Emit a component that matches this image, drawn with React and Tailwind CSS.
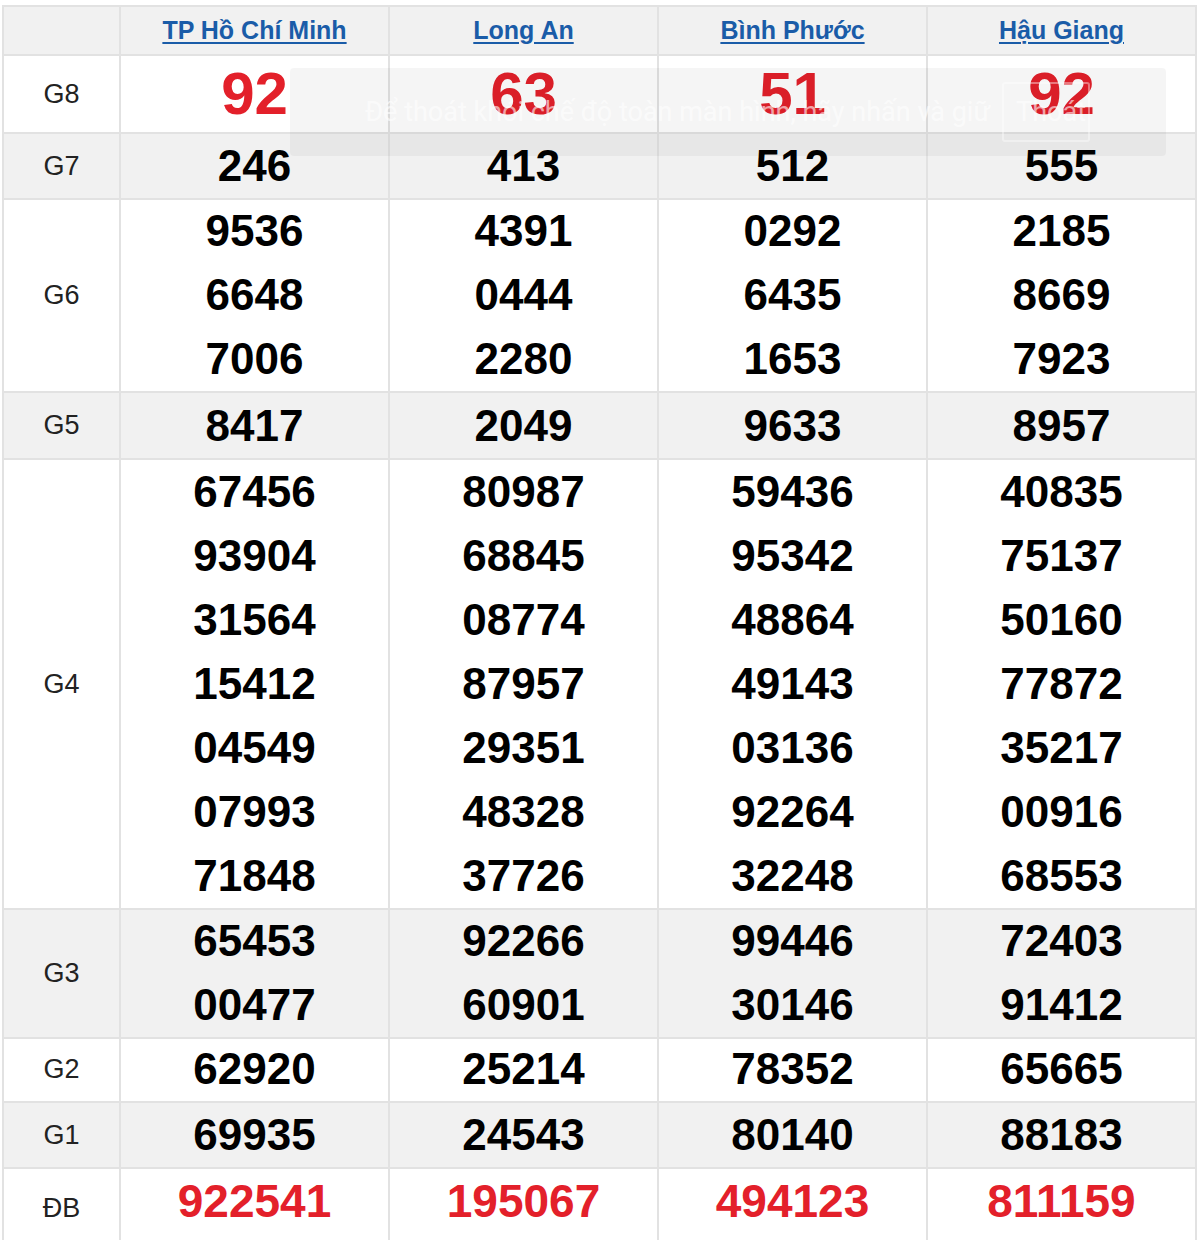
import React from "react";

const cols = [
  { name: "TP Hồ Chí Minh", g8: "92", g7: "246", g6: ["9536", "6648", "7006"], g5: "8417", g4: ["67456", "93904", "31564", "15412", "04549", "07993", "71848"], g3: ["65453", "00477"], g2: "62920", g1: "69935", db: "922541" },
  { name: "Long An", g8: "63", g7: "413", g6: ["4391", "0444", "2280"], g5: "2049", g4: ["80987", "68845", "08774", "87957", "29351", "48328", "37726"], g3: ["92266", "60901"], g2: "25214", g1: "24543", db: "195067" },
  { name: "Bình Phước", g8: "51", g7: "512", g6: ["0292", "6435", "1653"], g5: "9633", g4: ["59436", "95342", "48864", "49143", "03136", "92264", "32248"], g3: ["99446", "30146"], g2: "78352", g1: "80140", db: "494123" },
  { name: "Hậu Giang", g8: "92", g7: "555", g6: ["2185", "8669", "7923"], g5: "8957", g4: ["40835", "75137", "50160", "77872", "35217", "00916", "68553"], g3: ["72403", "91412"], g2: "65665", g1: "88183", db: "811159" },
];

const rows = [
  { key: "g8", label: "G8", h: "h-[78px]", bg: "bg-white", kind: "g8" },
  { key: "g7", label: "G7", h: "h-[65px]", bg: "bg-[#f1f1f1]" },
  { key: "g6", label: "G6", h: "h-[194px]", bg: "bg-white" },
  { key: "g5", label: "G5", h: "h-[67px]", bg: "bg-[#f1f1f1]" },
  { key: "g4", label: "G4", h: "h-[449px]", bg: "bg-white" },
  { key: "g3", label: "G3", h: "h-[128px]", bg: "bg-[#f1f1f1]" },
  { key: "g2", label: "G2", h: "h-[66px]", bg: "bg-white" },
  { key: "g1", label: "G1", h: "h-[65px]", bg: "bg-[#f1f1f1]" },
  { key: "db", label: "ĐB", h: "h-[90px]", bg: "bg-white", kind: "db" },
];

const gridCls = "grid grid-cols-[117px_269px_269px_269px_269px]";
const cellBorder = "border-r-2 border-b-2 border-[#e2e2e2]";

function NumberCell({ value, kind }) {
  const vals = Array.isArray(value) ? value : [value];
  if (kind === "g8") {
    return (
      <div className="flex flex-col items-center justify-center h-full">
        <span className="text-[60px] leading-[64px] font-bold text-[#e3202a]">{vals[0]}</span>
      </div>
    );
  }
  if (kind === "db") {
    return (
      <div className="flex flex-col items-center justify-start h-full">
        <span className="text-[46px] leading-[66px] font-bold text-[#e3202a]">{vals[0]}</span>
      </div>
    );
  }
  return (
    <div className="flex flex-col items-center justify-center h-full">
      {vals.map((v, i) => (
        <span key={i} className="text-[44px] leading-[64px] font-bold text-black">{v}</span>
      ))}
    </div>
  );
}

export default function App() {
  return (
    <div className="relative w-[1200px] h-[1240px] overflow-hidden bg-white font-['Liberation_Sans',Arial,sans-serif]">
      <div className="pl-[2px] pt-[5px]">
        <div className="w-[1195px] border-l-2 border-t-2 border-[#e2e2e2]">
          {/* header */}
          <div className={`${gridCls} h-[49px] bg-[#f1f1f1]`}>
            <div className={cellBorder}></div>
            {cols.map((c) => (
              <div key={c.name} className={`${cellBorder} flex items-center justify-center`}>
                <a className="text-[25px] font-bold text-[#1a5ca8] underline decoration-2 underline-offset-[3px] cursor-pointer">{c.name}</a>
              </div>
            ))}
          </div>
          {rows.map((r) => (
            <div key={r.key} className={`${gridCls} ${r.h} ${r.bg}`}>
              <div className={`${cellBorder} flex ${r.kind === "db" ? "items-start pt-[20px]" : "items-center"} justify-center`}>
                <span className="text-[27px] text-[#222]">{r.label}</span>
              </div>
              {cols.map((c) => (
                <div key={c.name} className={cellBorder}>
                  <NumberCell value={c[r.key]} kind={r.kind} />
                </div>
              ))}
            </div>
          ))}
        </div>
      </div>

      {/* fullscreen toast overlay */}
      <div className="absolute left-[290px] top-[68px] w-[876px] h-[88px] rounded-[4px] bg-black/[0.04] flex items-center font-['Roboto',sans-serif]">
        <span className="ml-[75px] text-[27px] text-white/60 whitespace-nowrap">Để thoát khỏi chế độ toàn màn hình, hãy nhấn và giữ</span>
        <span className="ml-[12px] h-[60px] w-[88px] border-2 border-white/40 rounded-[3px] flex items-center pl-[12px] text-[27px] text-white/60">Thoát</span>
      </div>
    </div>
  );
}
